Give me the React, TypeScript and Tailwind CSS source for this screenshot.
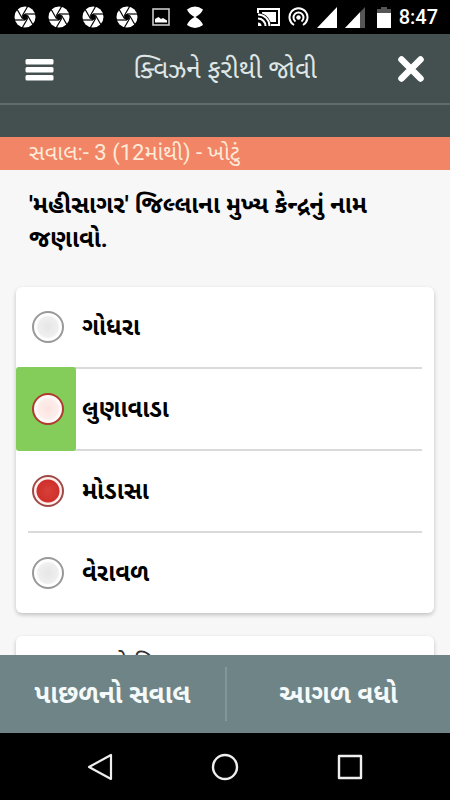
import { useState } from "react";
import clsx from "clsx";

interface Option {
  id: string;
  label: string;
  correct?: boolean;
}

const OPTIONS: Option[] = [
  { id: "godhra", label: "ગોધરા" },
  { id: "lunawada", label: "લુણાવાડા", correct: true },
  { id: "modasa", label: "મોડાસા" },
  { id: "veraval", label: "વેરાવળ" },
];

const BLADES = [0, 60, 120, 180, 240, 300];

function Shutter() {
  return (
    <svg width="26" height="26" viewBox="0 0 26 26">
      <circle cx="13" cy="13" r="10.500" fill="#fff" />
      <g stroke="#000" strokeWidth="1.200" fill="#000">
        <path d="M13 10.500l2.200 1.200v2.600L13 15.500l-2.200-1.200v-2.600z" />
        {BLADES.map((angle) => (
          <path key={angle} d="M13 10H24" transform={`rotate(${angle} 13 13)`} />
        ))}
      </g>
    </svg>
  );
}

function StatusBar() {
  return (
    <div className="flex h-[34px] shrink-0 items-center justify-between bg-black px-3 text-white">
      <div className="flex items-center gap-2">
        <Shutter />
        <Shutter />
        <Shutter />
        <Shutter />
        <svg width="26" height="26" viewBox="0 0 26 26">
          <rect x="5" y="5" width="16" height="16" fill="none" stroke="#c9c9c9" strokeWidth="1.6" />
          <path d="M7 18.500v-3.500l3.500-2 2.500 2 2-1 4 2.500v2z" fill="#fff" />
        </svg>
        <svg width="26" height="26" viewBox="0 0 26 26" fill="#fff">
          <path d="M5 5.500Q13 -0.500 21 5.500Q19.500 9.500 13.500 13Q19.500 16.500 21 21Q13 27 5 21Q6.500 16.500 12.500 13Q6.500 9.500 5 5.500z" />
        </svg>
      </div>

      <div className="flex items-center gap-2">
        <svg width="23" height="20" viewBox="0 0 23 20" fill="none" stroke="#fff" strokeWidth="2">
          <path d="M1 6V2h21v16h-8" />
          <path d="M1 7.500a11.500 11.500 0 0 1 11.500 11.500M1 11.500a7.500 7.500 0 0 1 7.500 7.500" />
          <path d="M1 15.500a3.500 3.500 0 0 1 3.500 3.500H1z" fill="#fff" stroke="none" />
          <path d="M5 5h14v10h-5.500C12 11 9 7.500 5 6.500z" fill="#fff" stroke="none" />
        </svg>
        <svg width="21" height="20" viewBox="0 0 21 20" fill="none" stroke="#fff" strokeWidth="2">
          <path d="M6 18A9 9 0 1 1 15 18" />
          <path d="M7.500 14.500a5 5 0 1 1 6 0" />
          <circle cx="10.500" cy="10.500" r="2.200" fill="#fff" stroke="none" />
        </svg>
        <svg width="20" height="21" viewBox="0 0 20 21">
          <path d="M20 0v21H0z" fill="#fff" />
        </svg>
        <svg width="20" height="21" viewBox="0 0 20 21">
          <path d="M20 0v21H0z" fill="#555" />
          <path d="M15 5.300V21H0z" fill="#fff" />
        </svg>
        <svg className="ml-1" width="14" height="21" viewBox="0 0 14 21">
          <path d="M4 0h6v2h4v4H0V2h4z" fill="#555" />
          <path d="M0 6h14v15H0z" fill="#fff" />
        </svg>
        <span className="font-[Roboto] text-xl font-medium leading-6">8:47</span>
      </div>
    </div>
  );
}

function Header() {
  return (
    <header className="h-[103px] shrink-0 bg-[#445050]">
      <div className="flex h-[71px] items-center justify-between border-b-2 border-[#5f6c6b] px-6">
        <button type="button" aria-label="Menu">
          <svg width="30" height="26" viewBox="0 0 30 26" fill="#fff">
            <rect x="1.500" y="3" width="28" height="5.500" rx="1.500" />
            <rect x="1.500" y="11" width="28" height="5.500" rx="1.500" />
            <rect x="1.500" y="19" width="28" height="5.500" rx="1.500" />
          </svg>
        </button>
        <h1 className="text-[26px] leading-8 text-[#dfe6e6]">ક્વિઝને ફરીથી જોવી</h1>
        <button type="button" aria-label="Close">
          <svg width="30" height="30" viewBox="0 0 30 30" stroke="#fff" strokeWidth="6.500" strokeLinecap="round">
            <path d="M5.500 5.500l19 19M24.500 5.500l-19 19" />
          </svg>
        </button>
      </div>
    </header>
  );
}

export default function App() {
  const [picked, setPicked] = useState("modasa");

  return (
    <div className="flex h-screen flex-col overflow-hidden bg-[#f7f7f7] font-['Roboto','Noto_Sans_Gujarati','Noto_Sans',sans-serif]">
      <StatusBar />
      <Header />

      <main className="min-h-0 flex-1 overflow-hidden">
        <div className="h-[33px] bg-[#f28566] px-[29px] text-[22px] leading-8 text-[#fdebd8]">
          સવાલ:- 3 (12માંથી) - ખોટું
        </div>

        <h2 id="question" className="px-[29px] pt-[18px] text-2xl font-bold leading-[34px] text-black">
          'મહીસાગર' જિલ્લાના મુખ્ય કેન્દ્રનું નામ જણાવો.
        </h2>

        <div
          role="radiogroup"
          aria-labelledby="question"
          className="mx-4 mt-[31px] rounded-md bg-white px-3 shadow-[0_2px_4px_rgba(0,0,0,0.22)]"
        >
          {OPTIONS.map((option, i) => (
            <label
              key={option.id}
              className={clsx("flex", i < OPTIONS.length - 1 ? "h-[82px] border-b-2 border-[#dadada]" : "h-20")}
            >
              <span
                className={clsx(
                  "-my-[2px] -ml-3 flex w-[60px] shrink-0 items-center justify-center rounded-[3px] pl-1",
                  option.correct && "bg-[#84cd5b]"
                )}
              >
                <input
                  type="radio"
                  name="answer"
                  value={option.id}
                  checked={picked === option.id}
                  onChange={() => setPicked(option.id)}
                  className={clsx(
                    "size-8 appearance-none rounded-full border-2 bg-white",
                    option.correct
                      ? "border-[#b03a2e] bg-[radial-gradient(circle,#fbe3df_0,#fdeeeb_10px,#fffafa_12px)]"
                      : "border-[#999999] bg-[radial-gradient(circle,#e6e6e6_0,#efefef_10px,#ffffff_12px)]",
                    "checked:border-[#a04a48] checked:bg-[radial-gradient(circle,#d9403a_0,#cf2f2a_11px,#fff0ee_12px)]"
                  )}
                />
              </span>
              <span className="flex flex-1 items-center pl-[6px] text-2xl font-bold text-black">
                {option.label}
              </span>
            </label>
          ))}
        </div>

        <section className="mx-4 mt-[23px] rounded-md bg-white px-[66px] pt-3 text-2xl text-[#333333] shadow-[0_2px_4px_rgba(0,0,0,0.22)]">
          સાચો વિકલ્પ
        </section>
      </main>

      <footer className="grid h-[78px] shrink-0 grid-cols-2 bg-[#6f8487] py-3 text-[26px] font-bold text-[#f4fafa]">
        <button type="button">પાછળનો સવાલ</button>
        <button type="button" className="border-l-2 border-[#82979a]">
          આગળ વધો
        </button>
      </footer>

      <nav className="flex h-[67px] shrink-0 items-center justify-center gap-24 bg-black">
        <button type="button" aria-label="Back">
          <svg width="28" height="30" viewBox="0 0 28 30" fill="none" stroke="#eee" strokeWidth="2.200" strokeLinejoin="round">
            <path d="M25 3v24L3 15z" />
          </svg>
        </button>
        <button type="button" aria-label="Home">
          <svg width="30" height="30" viewBox="0 0 30 30" fill="none" stroke="#eee" strokeWidth="2.400">
            <circle cx="15" cy="15" r="12" />
          </svg>
        </button>
        <button type="button" aria-label="Recent apps">
          <svg width="28" height="30" viewBox="0 0 28 30" fill="none" stroke="#eee" strokeWidth="2.400" strokeLinejoin="round">
            <rect x="3" y="4" width="22" height="22" />
          </svg>
        </button>
      </nav>
    </div>
  );
}
